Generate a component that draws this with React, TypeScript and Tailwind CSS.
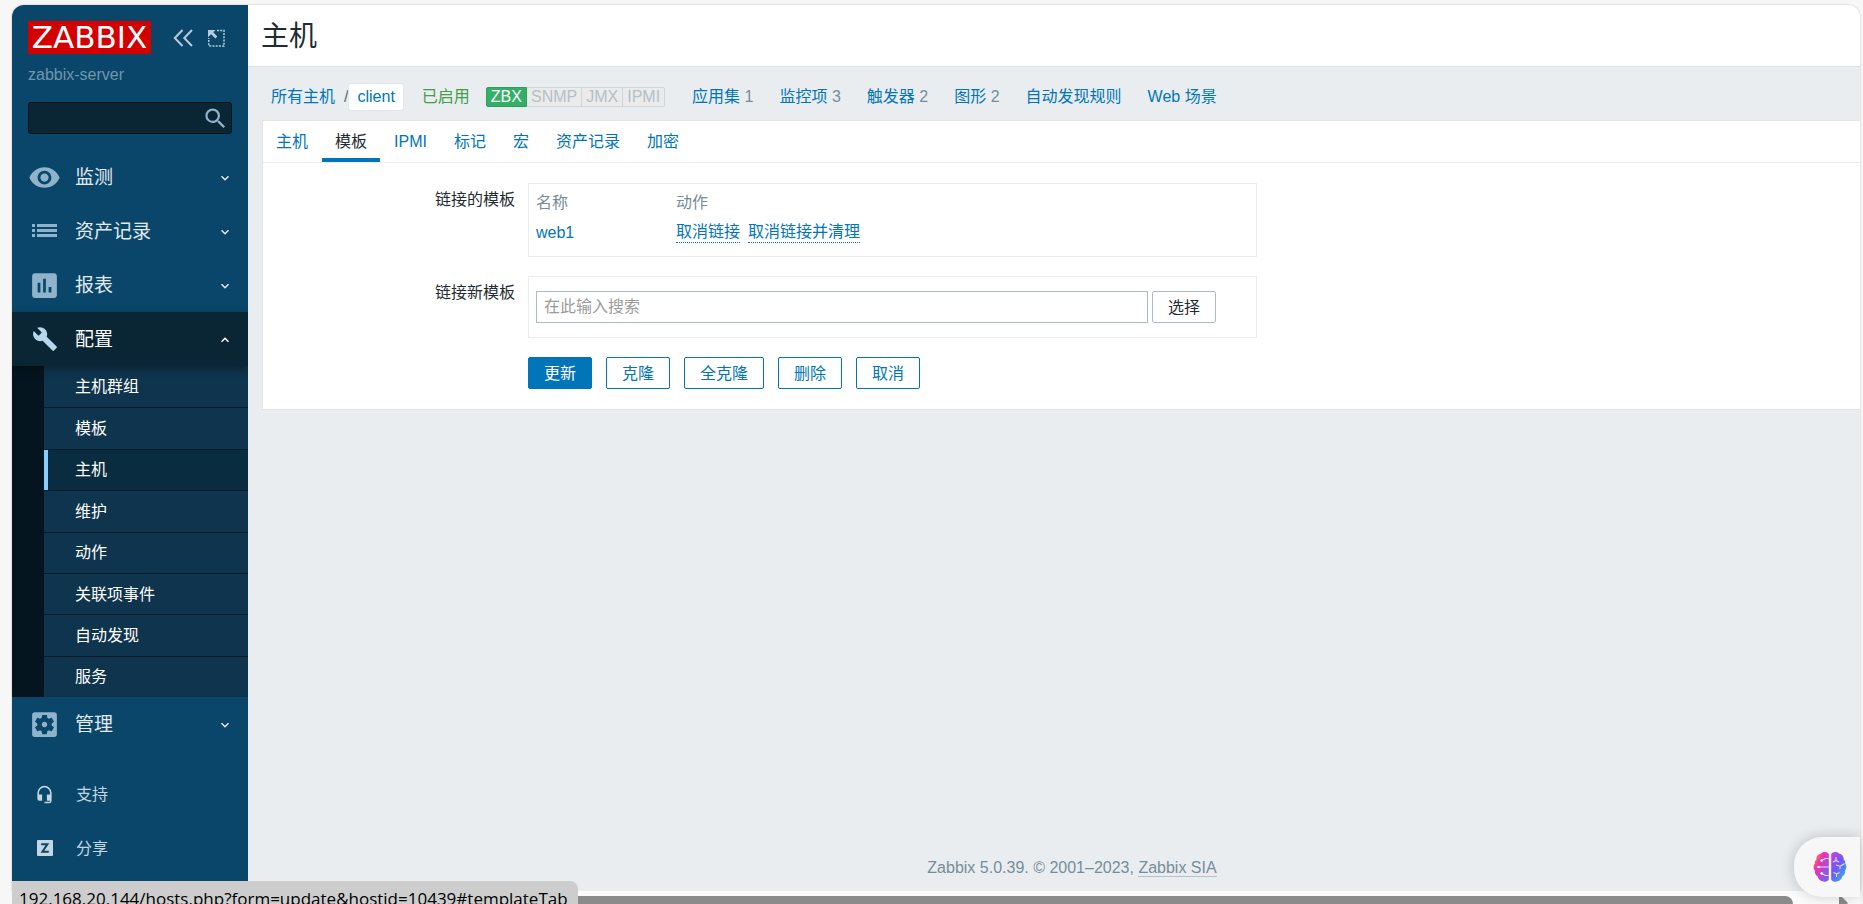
import React, { useState } from 'react';
import { MdBuild, MdHeadsetMic, MdInsertChart, MdRemoveRedEye, MdSearch, MdSettingsApplications } from 'react-icons/md';

const submenu = ['主机群组', '模板', '主机', '维护', '动作', '关联项事件', '自动发现', '服务'];

const objectLinks = [
  { name: '应用集', count: 1 },
  { name: '监控项', count: 3 },
  { name: '触发器', count: 2 },
  { name: '图形', count: 2 },
  { name: '自动发现规则' },
  { name: 'Web 场景' },
];

const tabs = ['主机', '模板', 'IPMI', '标记', '宏', '资产记录', '加密'];

function Chevron({ up = false }: { up?: boolean }) {
  return (
    <svg className="mt-[2px]" width="10" height="6" viewBox="0 0 10 6" fill="none" stroke="currentColor" strokeWidth="1.5">
      <path d={up ? 'M1.5 4.8 5 1.3l3.5 3.5' : 'M1.5 1.2 5 4.7l3.5-3.5'} />
    </svg>
  );
}

function ListIcon() {
  return (
    <svg width="25" height="16" viewBox="0 0 25 16" fill="currentColor">
      {[1, 6, 11].map(y => (
        <g key={y}>
          <rect x="0" y={y} width="3" height="3" />
          <rect x="5" y={y} width="20" height="3" />
        </g>
      ))}
    </svg>
  );
}

function ShareIcon() {
  return (
    <svg width="16" height="16" viewBox="0 0 16 16">
      <rect width="16" height="16" rx="1" fill="currentColor" />
      <path d="M4.200 4.200h6.200L5.400 11.800h6.400" fill="none" stroke="#0a466a" strokeWidth="2" />
    </svg>
  );
}

function BrainIcon() {
  return (
    <svg width="34" height="32" viewBox="0 0 34 32">
      <defs>
        <linearGradient id="brainLeft" x1="0" y1="0" x2="1" y2="1">
          <stop offset="0" stopColor="#ffb000" />
          <stop offset="0.35" stopColor="#f22fb4" />
          <stop offset="1" stopColor="#5b6cf8" />
        </linearGradient>
        <linearGradient id="brainRight" x1="0" y1="0" x2="0.8" y2="1">
          <stop offset="0" stopColor="#d83bd6" />
          <stop offset="0.5" stopColor="#6a5af5" />
          <stop offset="1" stopColor="#33b4ff" />
        </linearGradient>
      </defs>
      <path d="M15.800 3C14.600 .8 10.200 .2 8.200 2.600 5 3 3.200 5.400 3.400 8.400 1.600 9.600 1.600 11.600 1.900 12.600.2 14 .2 18 1.900 19.400 1.400 22.400 3 24.600 4.600 25.200 5.200 28.600 8 30.200 9.800 30.200 12 31.600 15.200 30.400 15.800 28.600Z" fill="url(#brainLeft)" />
      <path d="M18.200 3C19.400 .8 23.800 .2 25.800 2.600 29 3 30.800 5.400 30.600 8.400 32.400 9.600 32.400 11.600 32.100 12.600 33.800 14 33.800 18 32.100 19.400 32.600 22.400 31 24.600 29.400 25.200 28.800 28.600 26 30.200 24.200 30.200 22 31.600 18.800 30.400 18.200 28.600Z" fill="url(#brainRight)" />
      <g fill="none" stroke="#f3d5ff" strokeWidth="1.100">
        <path d="M15.800 7.500h-3.600L9 9.500M15.800 16H6M15.800 24.500h-3.600L9 22.500" />
        <path d="M23 6v3.500M23 9.500l-3 1.500M23 9.500l3 1.500M23 14l4 1.200 4.500-2.400M27 15.200v3M20.500 21.500l3 1.500 3-1.500M23.500 23v3" />
      </g>
      <g fill="#fff">
        <circle cx="8.600" cy="9.600" r="1.300" />
        <circle cx="5.500" cy="16" r="1.300" />
        <circle cx="8.600" cy="22.400" r="1.300" />
      </g>
    </svg>
  );
}

function MenuItem({ icon, label, open = false }: { icon: React.ReactNode; label: string; open?: boolean }) {
  return (
    <button
      className={`flex h-[54px] w-full items-center pr-[18px] pl-4 text-left text-[19px] ${open ? 'relative bg-[#0a2635] text-white shadow-[0_3px_8px_rgba(0,0,0,0.35)]' : 'text-[#e2eaef]'}`}
    >
      <span className={`flex w-[33px] justify-center ${open ? 'text-[#b8d6ec]' : 'text-[#8fb3cb]'}`}>{icon}</span>
      <span className="ml-[14px] flex-1 pt-[2px]">{label}</span>
      <Chevron up={open} />
    </button>
  );
}

function Sidebar() {
  return (
    <aside className="flex w-[236px] shrink-0 flex-col overflow-hidden bg-[#0a466a]">
      <div className="flex items-center px-4 pt-4">
        <a href="#logo" className="flex h-[33px] w-[123px] items-center justify-center bg-[#d40000] font-['DejaVu_Sans'] text-[31px] leading-none text-white">
          ZABBIX
        </a>
        <button aria-label="Collapse" className="ml-[22px] text-[#b5cbd9]">
          <svg width="21" height="18" viewBox="0 0 21 18" fill="none" stroke="currentColor" strokeWidth="2">
            <path d="M9.500 1 1.800 9l7.700 8M19 1l-7.700 8 7.700 8" />
          </svg>
        </button>
        <button aria-label="Kiosk" className="ml-[14px] text-[#b5cbd9]">
          <svg width="17" height="18" viewBox="0 0 17 18" fill="none" stroke="currentColor">
            <path d="M9 1.500h7v15.500H.8V9" strokeWidth="1.500" strokeDasharray="2 1.200" />
            <path d="M0 1h7.500L5.300 3.200l4 4.200-2 2-4.200-4.200L0 8.200Z" fill="currentColor" stroke="none" />
          </svg>
        </button>
      </div>
      <div className="px-4 pt-[9px] leading-6 text-[#6f96b0]">zabbix-server</div>
      <div className="mx-4 mt-[15px] flex h-8 items-center rounded-[3px] border border-[#05121a] bg-[#0a2635]">
        <input aria-label="Search" className="h-full min-w-0 flex-1 bg-transparent px-2 text-white outline-none" />
        <button aria-label="Search" className="mr-[2px] text-[#8fb3cb]"><MdSearch size={27} /></button>
      </div>

      <nav className="mt-4">
        <MenuItem icon={<MdRemoveRedEye size={33} />} label="监测" />
        <MenuItem icon={<ListIcon />} label="资产记录" />
        <MenuItem icon={<MdInsertChart size={33} />} label="报表" />
        <MenuItem icon={<MdBuild size={26} />} label="配置" open />
        <ul className="grid min-h-[331px] auto-rows-fr bg-[#04151f] pl-8">
          {submenu.map((item, i) => (
            <li key={item} className={i > 0 ? 'border-t border-[#061a27]' : ''}>
              <a
                href={`#${item}`}
                className={`flex h-full items-center border-l-4 pt-px pl-[27px] text-white ${i === 2 ? 'border-[#87ceff] bg-[#0a2c40]' : 'border-[#0f344d] bg-[#0f344d]'}`}
              >
                {item}
              </a>
            </li>
          ))}
        </ul>
        <MenuItem icon={<MdSettingsApplications size={33} />} label="管理" />
      </nav>

      <div className="mt-4 text-[#c4d6e1]">
        <a href="#support" className="flex h-[54px] items-center pl-4">
          <span className="flex w-[33px] justify-center"><MdHeadsetMic size={19} /></span>
          <span className="ml-[15px] pt-px">支持</span>
        </a>
        <a href="#share" className="flex h-[54px] items-center pl-4">
          <span className="flex w-[33px] justify-center"><ShareIcon /></span>
          <span className="ml-[15px] pt-px">分享</span>
        </a>
      </div>
    </aside>
  );
}

function HostNav() {
  return (
    <div className="flex h-[53px] items-center gap-[26px] pt-[6px] pl-[23px] text-[#0275b8]">
      <div className="flex items-center">
        <a href="#hosts">所有主机</a>
        <span className="ml-[9px] text-[#5c6b73]">/</span>
        <a href="#client" className="flex h-7 items-center rounded-[3px] border border-[#e1e7ea] bg-white px-2">client</a>
      </div>
      <span className="-ml-2 text-[#429e47]">已启用</span>
      <div className="-ml-[10px] flex h-5 items-center pr-px text-[#b4c0c7]">
        <span className="flex h-5 items-center rounded-l-[2px] border border-[#2f9f5e] bg-[#34af67] px-1 text-white">ZBX</span>
        {['SNMP', 'JMX', 'IPMI'].map(name => (
          <span key={name} className="flex h-5 items-center border border-l-0 border-[#ced6da] bg-[#ebebeb] px-1 last:rounded-r-[2px]">{name}</span>
        ))}
      </div>
      {objectLinks.map(link => (
        <span key={link.name}>
          <a href={`#${link.name}`}>{link.name}</a>
          {link.count && <span className="text-[#768d99]"> {link.count}</span>}
        </span>
      ))}
    </div>
  );
}

function TemplateForm() {
  const [search, setSearch] = useState('');
  const buttons = ['克隆', '全克隆', '删除', '取消'];

  return (
    <form className="grid grid-cols-[252px_1fr] gap-x-[13px] gap-y-[19px] py-5">
      <div className="pt-[5px] text-right leading-6">链接的模板</div>
      <div className="w-[729px] border border-[#ebeef0] px-[7px] pt-[7px] pb-[11px]">
        <table className="text-left leading-6">
          <thead>
            <tr className="text-[#768d99]">
              <th className="w-[140px] pb-[6px] font-normal">名称</th>
              <th className="pb-[6px] font-normal">动作</th>
            </tr>
          </thead>
          <tbody>
            <tr className="text-[#0275b8]">
              <td><a href="#web1">web1</a></td>
              <td className="flex gap-2 pt-px leading-5">
                <button type="button" className="border-b border-dotted border-[#0275b8]">取消链接</button>
                <button type="button" className="border-b border-dotted border-[#0275b8]">取消链接并清理</button>
              </td>
            </tr>
          </tbody>
        </table>
      </div>

      <label htmlFor="templates" className="pt-[5px] text-right leading-6">链接新模板</label>
      <div className="flex w-[729px] gap-1 border border-[#ebeef0] px-[7px] py-[14px]">
        <input
          id="templates"
          value={search}
          onChange={e => setSearch(e.target.value)}
          placeholder="在此输入搜索"
          className="h-8 w-[612px] border border-[#acbbc2] px-[7px] outline-none placeholder:text-[#9b9b9b]"
        />
        <button type="button" className="h-8 rounded-[2px] border border-[#acbbc2] px-[15px] pt-[2px]">选择</button>
      </div>

      <div className="col-start-2 flex gap-[14px]">
        <button type="button" className="h-8 rounded-[2px] border border-[#0275b8] bg-[#0275b8] px-[15px] pt-[2px] text-white">更新</button>
        {buttons.map(label => (
          <button key={label} type="button" className="h-8 rounded-[2px] border border-[#0275b8] px-[15px] pt-[2px] text-[#0275b8]">{label}</button>
        ))}
      </div>
    </form>
  );
}

export default function App() {
  const [activeTab, setActiveTab] = useState('模板');

  return (
    <div className="relative flex h-screen flex-col overflow-hidden bg-[#f7f7f7] pt-[5px] pr-[3px] pl-3 font-['Liberation_Sans','Noto_Sans_CJK_SC',sans-serif] text-base text-[#1f2c33]">
      <div className="flex min-h-0 flex-1 overflow-hidden rounded-t-xl shadow-[0_0_2px_rgba(0,0,0,0.25)]">
        <Sidebar />
        <main className="flex min-w-0 flex-1 flex-col bg-[#e9edf0]">
          <header className="flex h-[62px] shrink-0 items-center border-b border-[#dfe4e7] bg-white pt-[3px] pl-[13px]">
            <h1 className="text-[28px]">主机</h1>
          </header>
          <HostNav />
          <section className="ml-[14px] border border-r-0 border-[#dfe4e7] bg-white">
            <div className="flex gap-px border-b border-[#ebeef0]">
              {tabs.map(tab => (
                <button
                  key={tab}
                  onClick={() => setActiveTab(tab)}
                  className={`h-[41px] border-b-4 px-[13px] pt-1 ${activeTab === tab ? 'border-[#0275b8]' : 'border-transparent text-[#0275b8]'}`}
                >
                  {tab}
                </button>
              ))}
            </div>
            <TemplateForm />
          </section>
          <footer className="mt-auto pb-[11px] pl-9 text-center leading-6 text-[#768d99]">
            Zabbix 5.0.39. © 2001–2023, <a href="#sia" className="border-b border-[#b5c2c9]">Zabbix SIA</a>
          </footer>
        </main>
      </div>

      {/* horizontal scroll bar */}
      <div className="flex h-[13px] shrink-0 bg-[#fcfcfc] pt-[5px]">
        <div className="mr-[46px] flex-1 rounded-tr-lg bg-[#8b8b8b]" />
        <svg className="mr-3" width="9" height="9" viewBox="0 0 9 9"><path d="M0 1h3l6 6-2 2H0Z" fill="#8b8b8b" /></svg>
      </div>

      <div className="absolute bottom-0 left-3 h-[23px] overflow-hidden rounded-tr-lg bg-[#cdcdcd] pt-[5px] pr-[10px] pl-[7px] font-['Open_Sans'] text-[17px] text-black">
        192.168.20.144/hosts.php?form=update&amp;hostid=10439#templateTab
      </div>
      <button aria-label="Assistant" className="absolute right-[3px] bottom-[7px] flex h-[60px] w-[66px] items-center rounded-l-[28px] bg-[#f7f7f7] pl-[19px] shadow-[0_0_14px_rgba(0,0,0,0.2)]">
        <BrainIcon />
      </button>
    </div>
  );
}
